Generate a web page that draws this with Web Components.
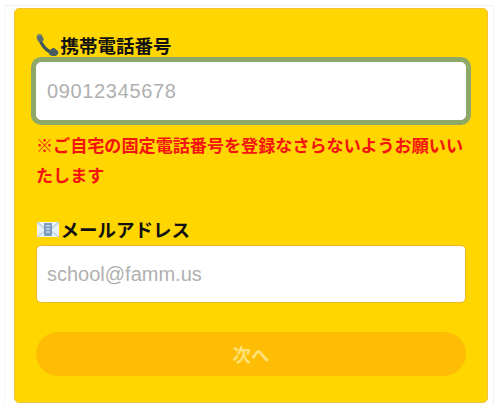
<!DOCTYPE html>
<html lang="ja"><head><meta charset="utf-8">
<style>
html,body{margin:0;padding:0;background:#fff;width:503px;height:418px;overflow:hidden}
body{font-family:"Liberation Sans","Noto Sans CJK JP",sans-serif}
</style></head><body>
<form-panel>
  <form-field label="携帯電話番号" placeholder="09012345678" icon="phone" focused>
    <p-note>※ご自宅の固定電話番号を登録なさらないようお願いいたします</p-note>
  </form-field>
  <form-field label="メールアドレス" placeholder="school@famm.us" icon="mail" style="margin-top:25px"></form-field>
  <next-button>次へ</next-button>
</form-panel>
<script>
const ICONS={
phone:`<svg width="24" height="24" viewBox="0 0 24 24" style="margin-left:-1px"><path d="M4.500 4.500C5.500 11 11 18.500 19 20" stroke="#3f5656" stroke-width="3.200" fill="none" stroke-linecap="round"/><path d="M1.800 3.200C2.600 1 5 .4 6.400 1.600L8.600 5.800C9 7 8 8.300 6.500 8.800L3.800 9.200C2.400 7.400 1.500 5.300 1.800 3.200z" fill="#5a6f6f"/><path d="M14 18.500l2.600-2.800c1-.8 2.200-.8 3.100-.2l3 2.300c.9 1 .8 2.500-.1 3.700-1.300 1.600-3.700 1.900-5.500 1.400-1.300-.4-2.400-1-3.300-1.700z" fill="#465c5e"/><path d="M3.300 3.500C3.800 2.500 4.800 2.200 5.600 2.600" stroke="#93a3a3" stroke-width="1" fill="none"/></svg>`,
mail:`<svg width="24" height="18" viewBox="0 0 24 18"><path d="M1 2h22v15H1z" fill="#eaf1f6"/><path d="M1 2l8 7M23 2l-8 7M1 17l8-6M23 17l-8-6" stroke="#bcd2e4" stroke-width="1.500" fill="none"/><rect x="8" y="3" width="8" height="13" rx="1" fill="#7f9fbe"/><path d="M10 6h4M10 9h4M10 12h4" stroke="#e8f0f6" stroke-width="1.200"/></svg>`};
const def=(n,html,setup)=>customElements.define(n,class extends HTMLElement{
  constructor(){super();this.attachShadow({mode:"open"}).innerHTML=html;}
  connectedCallback(){setup&&setup(this,this.shadowRoot);}
});
def("form-panel",`<style>
:host{display:block;box-sizing:border-box;width:490px;height:400px;margin:5px 0 0 4px;padding:2px 6px 0 9px;background:#fff;border:1px solid #f0f0f0;border-bottom:none;border-left-color:#f6f6f6}
.card{box-sizing:border-box;width:474px;height:395px;background:#ffd600;border:1px solid #efc23a;border-radius:5px;padding:24px 21px 0}
</style><div class="card"><slot></slot></div>`);
def("form-field",`<style>
:host{display:block;font-family:inherit}
.lab{display:flex;align-items:center;height:23px;font-size:18.5px;font-weight:700;color:#111;white-space:nowrap}
.ic{display:flex;width:24.5px;height:23px;align-items:center;justify-content:flex-start;flex:none}
.box{box-sizing:border-box;height:58px;margin-top:5px;background:#fff;border:1px solid #f3b428;border-radius:5px;padding-left:10px;display:flex;align-items:center;font-size:20px;color:#b0b0b0}
:host([focused]) .box{box-shadow:0 0 0 5px #8ea867;border-color:#fff;margin-top:6px;letter-spacing:.65px}
</style><div class="lab"><span class="ic"></span><span class="t"></span></div><div class="box"></div><slot></slot>`,
(h,s)=>{s.querySelector(".t").textContent=h.getAttribute("label");
s.querySelector(".box").textContent=h.getAttribute("placeholder");
s.querySelector(".ic").innerHTML=ICONS[h.getAttribute("icon")];});
def("p-note",`<style>
:host{display:block;margin-top:12px;font-size:17.1px;line-height:30px;font-weight:700;color:#f5130f}
</style><slot></slot>`);
def("next-button",`<style>
:host{display:flex;align-items:center;justify-content:center;height:44px;margin-top:29px;border-radius:22px;background:#ffbc05;color:#ffe27a;font-size:18.500px;font-weight:700}
</style><slot></slot>`);
</script>
</body></html>
